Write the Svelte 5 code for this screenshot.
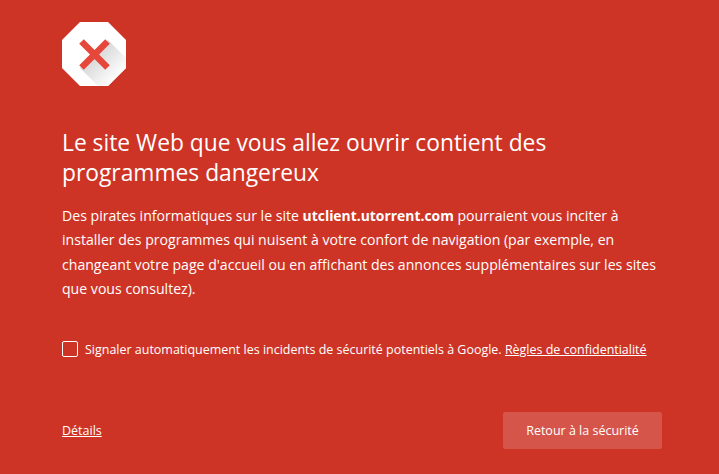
<script>
  const host = "utclient.utorrent.com";
</script>

<div class="page">
  <div class="icon">
    <svg width="64" height="64" viewBox="0 0 64 64">
      <defs>
        <linearGradient id="shade" gradientUnits="userSpaceOnUse" x1="32" y1="32" x2="56" y2="56">
          <stop offset="0" stop-color="#d6d6d6" />
          <stop offset="1" stop-color="#ffffff" />
        </linearGradient>
      </defs>
      <polygon points="18,0 46,0 64,18 64,46 46,64 18,64 0,46 0,18" fill="#fff" />
      <polygon points="46,18 64,36 64,46 46,64 36,64 18,46" fill="url(#shade)" />
      <path d="M19.5 19.5 L45.5 45.5 M45.5 19.5 L19.5 45.5" stroke="#e5483b" stroke-width="6.5" fill="none" />
    </svg>
  </div>

  <h1>Le site Web que vous allez ouvrir contient des programmes dangereux</h1>
  <p class="message">
    Des pirates informatiques sur le site <strong>{host}</strong> pourraient vous inciter à installer des
    programmes qui nuisent à votre confort de navigation (par exemple, en changeant votre page d'accueil ou en
    affichant des annonces supplémentaires sur les sites que vous consultez).
  </p>

  <div class="report">
    <span class="checkbox"></span>
    <span>Signaler automatiquement les incidents de sécurité potentiels à Google. <a href="#r">Règles de confidentialité</a></span>
  </div>

  <div class="footer">
    <a href="#d">Détails</a>
    <button>Retour à la sécurité</button>
  </div>
</div>

<style>
  :global(body) {
    background: #ce3426;
    overflow: hidden;
  }

  .page {
    height: 474px;
    box-sizing: border-box;
    padding: 22px 57px 0 62px;
    color: #fff;
    font-family: "Open Sans", sans-serif;
  }

  .icon {
    height: 64px;
  }

  .icon svg {
    display: block;
  }

  h1 {
    margin: 42px 0 0;
    font-size: 22.8px;
    font-weight: 400;
    line-height: 30px;
  }

  .message {
    margin: 16px 0 0;
    font-size: 14.1px;
    line-height: 24.4px;
  }

  .message strong {
    font-size: 13.9px;
  }

  .report {
    display: flex;
    align-items: center;
    gap: 7px;
    margin-top: 39px;
    font-size: 12.47px;
  }

  .checkbox {
    width: 14px;
    height: 14px;
    border: 1px solid #fff;
    border-radius: 2px;
  }

  a {
    color: #fff;
  }

  .footer {
    display: flex;
    justify-content: space-between;
    align-items: center;
    margin-top: 54px;
    font-size: 12.5px;
  }

  button {
    width: 159px;
    height: 37px;
    border: none;
    border-radius: 2px;
    background: #d5554a;
    color: #fff;
    font: inherit;
  }
</style>
